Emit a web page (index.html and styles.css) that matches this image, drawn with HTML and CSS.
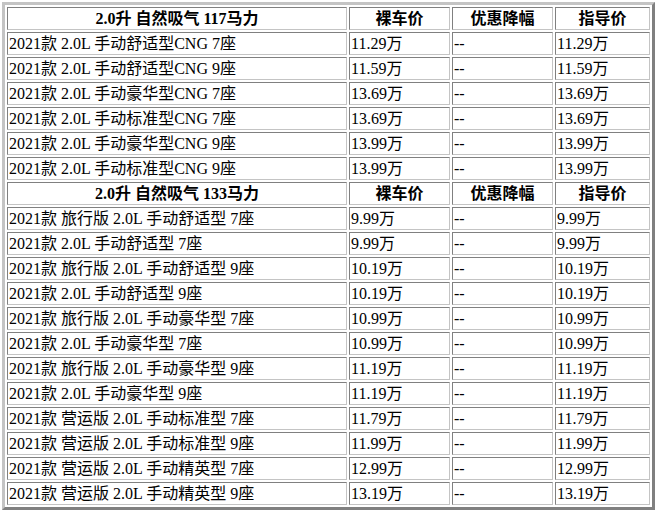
FILE: index.html
```html
<!DOCTYPE html>
<html lang="zh-CN">
<head>
<meta charset="utf-8">
<title>车型报价</title>
<link rel="stylesheet" href="styles.css">
</head>
<body>
<table class="price-table">
<colgroup>
<col class="c-name"><col class="c-price"><col class="c-off"><col class="c-guide">
</colgroup>
<tbody>
<tr class="head"><td>2.0升 自然吸气 117马力</td><td>裸车价</td><td>优惠降幅</td><td>指导价</td></tr>
<tr><td>2021款 2.0L 手动舒适型CNG 7座</td><td>11.29万</td><td>--</td><td>11.29万</td></tr>
<tr><td>2021款 2.0L 手动舒适型CNG 9座</td><td>11.59万</td><td>--</td><td>11.59万</td></tr>
<tr><td>2021款 2.0L 手动豪华型CNG 7座</td><td>13.69万</td><td>--</td><td>13.69万</td></tr>
<tr><td>2021款 2.0L 手动标准型CNG 7座</td><td>13.69万</td><td>--</td><td>13.69万</td></tr>
<tr><td>2021款 2.0L 手动豪华型CNG 9座</td><td>13.99万</td><td>--</td><td>13.99万</td></tr>
<tr><td>2021款 2.0L 手动标准型CNG 9座</td><td>13.99万</td><td>--</td><td>13.99万</td></tr>
<tr class="head"><td>2.0升 自然吸气 133马力</td><td>裸车价</td><td>优惠降幅</td><td>指导价</td></tr>
<tr><td>2021款 旅行版 2.0L 手动舒适型 7座</td><td>9.99万</td><td>--</td><td>9.99万</td></tr>
<tr><td>2021款 2.0L 手动舒适型 7座</td><td>9.99万</td><td>--</td><td>9.99万</td></tr>
<tr><td>2021款 旅行版 2.0L 手动舒适型 9座</td><td>10.19万</td><td>--</td><td>10.19万</td></tr>
<tr><td>2021款 2.0L 手动舒适型 9座</td><td>10.19万</td><td>--</td><td>10.19万</td></tr>
<tr><td>2021款 旅行版 2.0L 手动豪华型 7座</td><td>10.99万</td><td>--</td><td>10.99万</td></tr>
<tr><td>2021款 2.0L 手动豪华型 7座</td><td>10.99万</td><td>--</td><td>10.99万</td></tr>
<tr><td>2021款 旅行版 2.0L 手动豪华型 9座</td><td>11.19万</td><td>--</td><td>11.19万</td></tr>
<tr><td>2021款 2.0L 手动豪华型 9座</td><td>11.19万</td><td>--</td><td>11.19万</td></tr>
<tr><td>2021款 营运版 2.0L 手动标准型 7座</td><td>11.79万</td><td>--</td><td>11.79万</td></tr>
<tr><td>2021款 营运版 2.0L 手动标准型 9座</td><td>11.99万</td><td>--</td><td>11.99万</td></tr>
<tr><td>2021款 营运版 2.0L 手动精英型 7座</td><td>12.99万</td><td>--</td><td>12.99万</td></tr>
<tr><td>2021款 营运版 2.0L 手动精英型 9座</td><td>13.19万</td><td>--</td><td>13.19万</td></tr>
</tbody>
</table>
</body>
</html>
```
FILE: styles.css
```css
html, body {
  margin: 0;
  padding: 0;
  background: #ffffff;
}
body {
  padding: 2px;
  font-family: "Liberation Serif", "Noto Sans CJK SC", serif;
  font-size: 16px;
  color: #000;
}
.price-table {
  width: 653px;
  table-layout: fixed;
  border-collapse: separate;
  border-spacing: 2px;
  border: 3px solid;
  border-color: #c4c4c4 #808080 #808080 #c4c4c4;
}
.c-name { width: 340px; }
.c-price { width: 101px; }
.c-off { width: 101px; }
.c-guide { width: 95px; }
.price-table td {
  height: 23px;
  box-sizing: border-box;
  padding: 1px;
  line-height: 19px;
  border: 1px solid;
  border-color: #808080 #c4c4c4 #c4c4c4 #808080;
  white-space: nowrap;
  overflow: hidden;
  vertical-align: middle;
}
.head td {
  font-weight: bold;
  text-align: center;
}
```
